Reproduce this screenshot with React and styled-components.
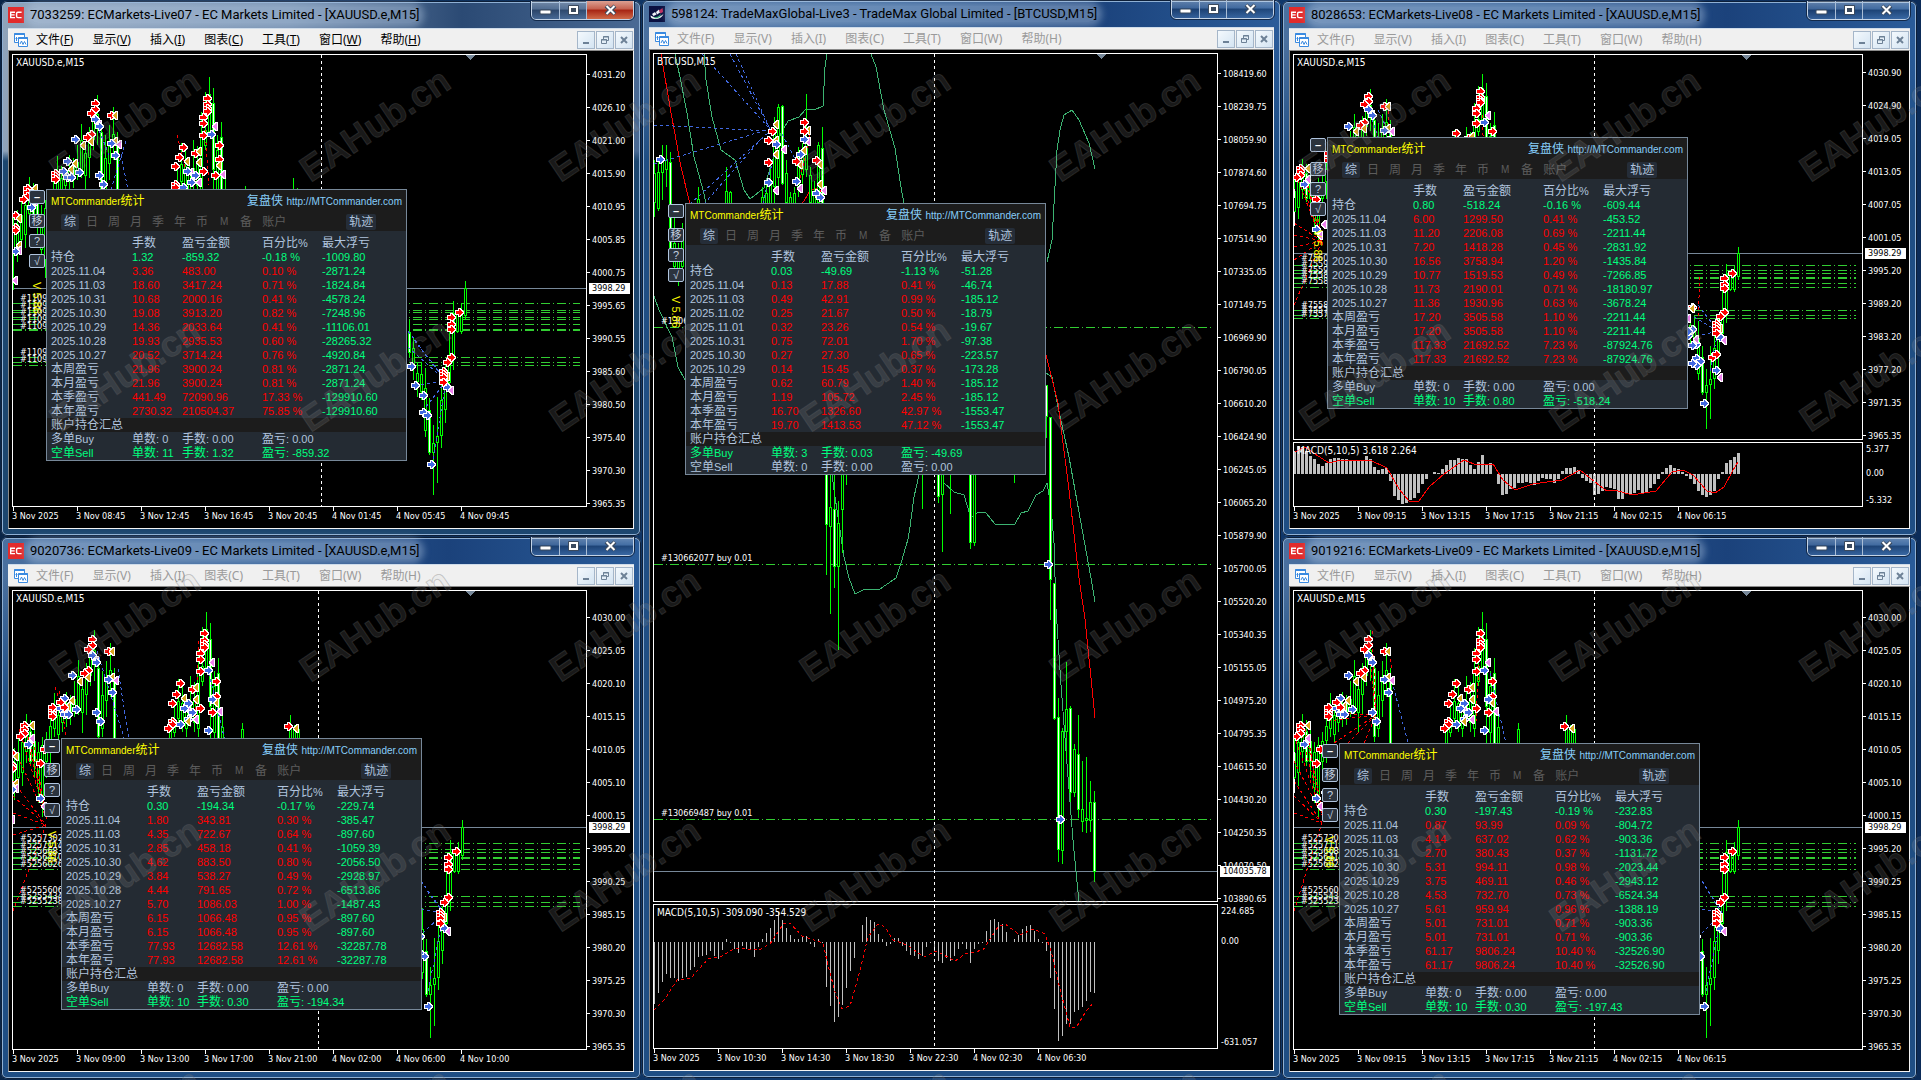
import React from "react";
import styled, { createGlobalStyle, css } from "styled-components";

const GlobalStyle = createGlobalStyle`
  * {
    box-sizing: border-box;
  }

  body {
    margin: 0;
    background: #0c2c56;
    overflow: hidden;
    font-family: "Noto Sans", "Noto Sans CJK SC", sans-serif;
  }

  button {
    padding: 0;
    border: none;
    background: none;
    font: inherit;
    color: inherit;
  }
`;

const Desktop = styled.div`
  position: relative;
  display: grid;
  grid-template-columns: 640fr 639fr 635fr;
  gap: 1px;
  height: 100vh;
  padding: 0 4px 1px 1px;
  overflow: hidden;
  background: linear-gradient(90deg, #0a2547, #123d73 50%, #0b2b58);
`;

const Column = styled.div`
  display: grid;
  grid-template-rows: ${(props) => (props.$single ? "1fr" : "535fr 542fr")};
  gap: 1px;
  min-width: 0;
  min-height: 0;
  padding: ${(props) => (props.$single ? "0 0 1px" : "1px 0 0")};
`;

/* ---------- window frame ---------- */

const Frame = styled.section`
  display: flex;
  flex-direction: column;
  min-width: 0;
  min-height: 0;
  padding: 0 7px 7px;
  border-radius: 6px;
  box-shadow: inset 0 0 0 1px #0d1f38, inset 0 0 0 2px #8fb0d4;
  background: ${(props) =>
    props.$active
      ? "linear-gradient(180deg, transparent 150px, #1c466f 160px), linear-gradient(90deg, #8fa3ba, #6f8aaa 45%, #2b4a74 72%, #4a6a94)"
      : "linear-gradient(180deg, transparent 40px, #1f4e84 160px), linear-gradient(90deg, #4a709f, #2c5a92 40%, #1b427b 70%, #2a5c9a)"};
`;

const TitleBar = styled.header`
  display: flex;
  align-items: flex-start;
  height: 28px;
  flex: none;
`;

const AppIcon = styled.svg`
  width: 16px;
  height: 16px;
  margin: 6px 6px 0 0;
  flex: none;
`;

const Title = styled.h1`
  margin: 6px 0 0;
  border-radius: 8px;
  background: rgba(190, 210, 235, 0.4);
  box-shadow: 0 0 7px 5px rgba(190, 210, 235, 0.4);
  font-family: Roboto, "Noto Sans", sans-serif;
  font-size: 13px;
  font-weight: 400;
  line-height: 16px;
  white-space: nowrap;
  color: #000;
`;

const Caption = styled.div`
  display: flex;
  height: 19px;
  margin-left: auto;
  border: 1px solid #c3d3e6;
  border-top: none;
  border-radius: 0 0 5px 5px;
  overflow: hidden;
  outline: 1px solid #12294a;
`;

const CaptionButton = styled.button`
  display: flex;
  align-items: center;
  justify-content: center;
  width: ${(props) => (props.$wide ? 47 : 27)}px;
  background: linear-gradient(
    180deg,
    rgba(255, 255, 255, 0.3),
    rgba(255, 255, 255, 0.12) 45%,
    rgba(0, 10, 30, 0.25) 50%,
    rgba(120, 160, 210, 0.2)
  );

  & + & {
    border-left: 1px solid #a9bdd6;
  }

  ${(props) =>
    props.$danger &&
    css`
      background: linear-gradient(180deg, #dca092, #c4604e 45%, #a62312 50%, #cf6a48);
    `}
`;

const MenuBar = styled.nav`
  display: flex;
  align-items: center;
  height: 21px;
  flex: none;
  padding: 0 1px 0 5px;
  background: #f0f0f0;
  box-shadow: 0 -1px 0 #cfdcea;
`;

const MenuIcon = styled.svg`
  width: 16px;
  height: 16px;
  margin-right: 7px;
`;

const MenuItems = styled.div`
  display: flex;
  gap: 19px;
  color: ${(props) => (props.$active ? "#000" : "#9a9a9a")};
`;

const MenuButton = styled.button`
  font-family: "Noto Sans", "Noto Sans CJK SC", sans-serif;
  font-size: 12px;
  line-height: 20px;
  white-space: nowrap;

  u {
    text-decoration: ${(props) => (props.$active ? "underline" : "none")};
  }
`;

const MdiButtons = styled.div`
  display: flex;
  gap: 1px;
  margin-left: auto;
`;

const MdiButton = styled.button`
  display: flex;
  align-items: center;
  justify-content: center;
  width: 18px;
  height: 18px;
  border: 1px solid #a5b6c9;
  background: linear-gradient(135deg, #f4f9fd, #d4e4f2);
`;

/* ---------- chart area ---------- */

const Client = styled.div`
  position: relative;
  display: flex;
  flex-direction: column;
  flex: 1;
  min-height: 0;
  padding: 3px 0 0 3px;
  border: 1px solid #f4f4f4;
  border-top-color: #8a8a8a;
  border-left-color: #8a8a8a;
  background: #000;
  color: #fff;
  font-family: "DejaVu Sans Condensed", "Noto Sans", sans-serif;
  font-size: 9px;
`;

const Pane = styled.div`
  display: flex;
  min-height: 0;
  flex: ${(props) => (props.$height ? `none` : "1")};
  height: ${(props) => (props.$height ? `${props.$height}px` : "auto")};
  margin-top: ${(props) => (props.$height ? 2 : 0)}px;
`;

const Plot = styled.div`
  position: relative;
  flex: 1;
  min-width: 0;
  border: 1px solid #fff;
  overflow: hidden;

  > svg {
    display: block;
    width: 100%;
    height: 100%;
  }
`;

const PlotLabel = styled.span`
  position: absolute;
  left: 3px;
  top: 2px;
  font-size: 10px;
  line-height: 12px;
`;

const PriceAxis = styled.div`
  position: relative;
  flex: none;
  width: ${(props) => props.$width}px;
  padding-top: ${(props) => props.$offset}px;
  overflow: hidden;
`;

const PriceLabel = styled.div`
  display: flex;
  align-items: center;
  gap: 2px;
  height: 33px;

  &::before {
    content: "";
    width: 3px;
    height: 1px;
    background: #fff;
  }
`;

const PriceTag = styled.div`
  position: absolute;
  left: 2px;
  right: 3px;
  top: ${(props) => props.$top}px;
  padding-left: 3px;
  background: #fff;
  color: #000;
  line-height: 11px;
`;

const ScaleAxis = styled.div`
  display: grid;
  grid-template-rows: ${(props) => props.$zero - 7}px 1fr 11px;
  flex: none;
  width: ${(props) => props.$width}px;
  padding: 2px 0 1px 3px;
  line-height: 11px;
`;

const TimeAxis = styled.div`
  display: flex;
  flex: none;
  height: 21px;
  overflow: hidden;
`;

const TimeLabel = styled.span`
  position: relative;
  flex: none;
  width: 64px;
  line-height: 19px;
  white-space: nowrap;

  &::before {
    content: "";
    position: absolute;
    left: 1px;
    top: 0;
    width: 1px;
    height: 4px;
    background: #fff;
  }
`;

/* ---------- MTCommander panel ---------- */

const Floating = styled.div`
  position: absolute;
  left: ${(props) => props.$x}px;
  top: ${(props) => props.$y}px;
  display: flex;
  align-items: flex-start;
  gap: 1px;
`;

const Rail = styled.div`
  display: flex;
  flex-direction: column;
  align-items: center;
  gap: 6px;
  padding-top: 1px;
`;

const RailButton = styled.button`
  width: 16px;
  height: 14px;
  border: 1px solid #b0c4de;
  border-radius: 2px;
  background: #2b333e;
  color: #c3d0e0;
  font-family: "Liberation Sans", "Noto Sans CJK SC", sans-serif;
  font-size: 11px;
  line-height: 12px;

  &:first-child {
    margin-bottom: 4px;
    font-weight: 700;
    color: #fff;
  }
`;

const Version = styled.span`
  margin-top: 8px;
  color: #ff0;
  font-family: "Liberation Sans", sans-serif;
  font-size: 11px;
  line-height: 12px;
  writing-mode: vertical-rl;
`;

const PanelBox = styled.div`
  width: 361px;
  border: 1px solid #778899;
  background: #242b33;
  color: #b0c4de;
  font-family: "Liberation Sans", "Noto Sans CJK SC", sans-serif;
  font-size: 11px;
`;

const PanelHead = styled.div`
  height: 41px;
  background: #1c1c1c;
`;

const PanelTitle = styled.div`
  display: flex;
  justify-content: space-between;
  height: 24px;
  padding: 0 4px;
  font-size: 10px;
  line-height: 22px;
  color: #ff0;

  a {
    color: #87cefa;
    text-decoration: none;
  }
`;

const Cn = styled.span`
  font-size: 12px;
`;

const Tabs = styled.div`
  display: flex;
  gap: 4px;
  padding-left: 14px;
`;

const Tab = styled.button`
  min-width: 18px;
  height: 16px;
  padding: 0 3px;
  border-radius: 2px;
  font-size: ${(props) => (props.$small ? 10 : 12)}px;
  line-height: 16px;
  color: #5c5c5c;

  ${(props) =>
    props.$on &&
    css`
      background: #252d38;
      color: #b0c4de;
    `}

  &:last-child {
    margin-left: 53px;
  }
`;

const Stats = styled.table`
  width: 100%;
  table-layout: fixed;
  border-collapse: collapse;

  th,
  td {
    height: 14px;
    padding: 0;
    font-weight: 400;
    line-height: 14px;
    text-align: left;
    white-space: nowrap;
  }

  thead th {
    height: 19px;
    padding-top: 5px;
  }

  th:first-child,
  td:first-child {
    padding-left: 4px;
  }
`;

const Value = styled.td`
  color: ${(props) => (props.$down ? "#00ff7f" : "#ff0000")};
`;

const SectionRow = styled.tr`
  background: #1c1c1c;
`;

const SumRow = styled.tr`
  color: ${(props) => (props.$open ? "#00ff7f" : "#b0c4de")};
`;

/* ---------- watermark ---------- */

const Watermarks = styled.div`
  position: absolute;
  inset: 0;
  display: grid;
  grid-template-columns: repeat(8, 250px);
  grid-auto-rows: 250px;
  overflow: hidden;
  pointer-events: none;
`;

const Watermark = styled.span`
  display: flex;
  align-items: center;
  justify-content: center;
  font-family: "Liberation Sans", Arial, sans-serif;
  font-size: 36px;
  font-weight: 700;
  color: rgba(200, 200, 200, 0.14);
  -webkit-text-stroke: 1px rgba(100, 100, 100, 0.3);
  transform: rotate(-34deg);
`;

const BAR = 4;
const LIME = "#00ff00";
const BLUE = "#4169e1";
const RED = "#ff0000";
const BAND = "#3cb371";

// Gold bars: [bars back, high, low, body top, body bottom, filled],
// levels are ticks below 4031.20
const goldBars = [
  [113, 141, 216, 150, 180, 0], [112, 136, 188, 150, 170, 0], [111, 124, 178, 141, 166, 0],
  [110, 114, 174, 131, 161, 0], [109, 103, 151, 112, 140, 0], [108, 109, 154, 120, 150, 1],
  [107, 116, 166, 130, 150, 1], [106, 131, 190, 140, 176, 0], [105, 126, 204, 134, 186, 0],
  [104, 121, 166, 130, 150, 0], [103, 98, 151, 115, 130, 0], [102, 82, 126, 100, 118, 0],
  [101, 92, 131, 104, 124, 0], [100, 98, 121, 104, 112, 0], [99, 81, 116, 96, 106, 0],
  [98, 84, 114, 90, 106, 0], [97, 71, 106, 88, 100, 0], [96, 50, 104, 66, 96, 0],
  [95, 71, 122, 79, 102, 0], [94, 53, 104, 60, 84, 0], [93, 36, 76, 44, 66, 0],
  [92, 21, 71, 40, 52, 0], [91, 46, 131, 58, 126, 1], [90, 61, 126, 84, 118, 0],
  [89, 51, 106, 72, 90, 0], [88, 33, 86, 60, 68, 0], [87, 58, 141, 70, 136, 1],
  [73, 111, 150, 118, 146, 0], [72, 91, 126, 112, 122, 0], [71, 69, 116, 90, 108, 0],
  [70, 76, 121, 92, 114, 0], [69, 91, 126, 98, 118, 0], [68, 66, 116, 94, 110, 1],
  [67, 72, 121, 90, 112, 0], [66, 38, 126, 62, 118, 0], [65, 18, 76, 56, 72, 0],
  [64, 3, 61, 20, 58, 0], [63, 14, 136, 29, 96, 1], [62, 61, 146, 76, 122, 0],
  [61, 48, 141, 63, 134, 1], [60, 98, 150, 116, 146, 0], [55, 112, 150, 118, 146, 0],
  [43, 104, 140, 116, 136, 0], [42, 114, 150, 118, 146, 0], [41, 115, 150, 118, 146, 0],
  [15, 240, 290, 256, 284, 0], [14, 246, 283, 258, 279, 1], [13, 263, 306, 274, 292, 0],
  [12, 288, 323, 299, 308, 0], [11, 288, 326, 300, 318, 0], [10, 294, 363, 314, 357, 0],
  [9, 324, 381, 336, 379, 1], [8, 351, 421, 369, 379, 0], [7, 323, 409, 362, 369, 0],
  [6, 299, 374, 326, 362, 0], [5, 292, 349, 306, 336, 0], [4, 256, 319, 286, 309, 0],
  [3, 227, 296, 239, 283, 0], [2, 237, 259, 240, 258, 0], [1, 229, 260, 239, 258, 0],
  [0, 207, 246, 214, 242, 0],
];

// s = sell arrow, b = buy arrow, y / v = close marks
const goldMarks = [
  ["s", 92, 29], ["s", 92, 35], ["s", 93, 39], ["s", 88, 41], ["s", 93, 60], ["s", 94, 63],
  ["s", 102, 99], ["s", 102, 102], ["s", 102, 105], ["s", 109, 114], ["s", 109, 118],
  ["s", 109, 122], ["s", 110, 125], ["s", 112, 141], ["s", 112, 153], ["s", 112, 156],
  ["y", 96, 71], ["y", 94, 67], ["y", 88, 41], ["y", 98, 89], ["y", 99, 95], ["y", 88, 67],
  ["y", 108, 114], ["y", 112, 144], ["y", 112, 171],
  ["v", 92, 50], ["v", 87, 70], ["v", 108, 127], ["v", 112, 176], ["v", 113, 206],
  ["b", 97, 65], ["b", 92, 45], ["b", 91, 52], ["b", 88, 69], ["b", 87, 81], ["b", 99, 87],
  ["b", 100, 97], ["b", 99, 103], ["b", 98, 103], ["b", 96, 98], ["b", 91, 101],
  ["b", 90, 110], ["b", 108, 133], ["b", 112, 177],
  ["s", 64, 24], ["s", 64, 30], ["s", 64, 34], ["s", 64, 37], ["s", 65, 43], ["s", 65, 49],
  ["s", 65, 61], ["s", 70, 73], ["s", 71, 83], ["s", 72, 92], ["s", 67, 79], ["s", 65, 97],
  ["s", 61, 71], ["s", 61, 85], ["s", 62, 101], ["s", 72, 110], ["s", 72, 113],
  ["y", 67, 77], ["y", 67, 88], ["y", 62, 91], ["y", 70, 87],
  ["v", 63, 52], ["v", 61, 100], ["v", 67, 108], ["v", 69, 98],
  ["b", 63, 60], ["b", 69, 97], ["b", 67, 101], ["b", 68, 108], ["b", 70, 113],
  ["b", 13, 292], ["b", 12, 311], ["b", 10, 321], ["b", 10, 338], ["b", 9, 341],
  ["b", 8, 390], ["b", 4, 313], ["y", 5, 302], ["v", 4, 316],
  ["s", 1, 238], ["s", 3, 243], ["s", 3, 250], ["s", 3, 255], ["s", 3, 283], ["s", 4, 288],
  ["s", 5, 297], ["s", 5, 300], ["s", 5, 303], ["s", 5, 308],
];

const extraMarks = [
  ["s", 73, 117], ["s", 43, 115], ["b", 68, 92], ["b", 62, 88], ["y", 69, 110],
  ["b", 63, 119], ["s", 100, 91], ["s", 102, 96], ["s", 104, 137], ["s", 105, 151],
  ["v", 104, 180], ["v", 105, 193], ["b", 105, 186], ["s", 99, 96], ["y", 42, 117],
];

const rightMarks = [
  ["s", 11, 278], ["y", 12, 279], ["v", 13, 290], ["b", 11, 303], ["b", 12, 306],
  ["v", 11, 315], ["b", 11, 322], ["b", 10, 346], ["b", 11, 344], ["s", 6, 337],
  ["s", 5, 333], ["b", 5, 352], ["v", 5, 360],
];

// BTC bars in plot pixels from the top of the pane
const btcBars = [
  [110, 107, 164, 120, 150, 0], [109, 107, 158, 119, 156, 0], [108, 92, 147, 108, 120, 0],
  [107, 92, 134, 107, 117, 0], [106, 99, 202, 109, 200, 1], [105, 157, 222, 190, 214, 0],
  [104, 190, 233, 196, 228, 0], [103, 170, 218, 184, 214, 0], [99, 134, 160, 146, 158, 0],
  [92, 114, 160, 138, 156, 0], [91, 138, 160, 139, 158, 0], [83, 134, 160, 144, 158, 0],
  [82, 127, 160, 140, 158, 0], [81, 107, 160, 128, 158, 0], [80, 64, 150, 78, 134, 0],
  [79, 51, 134, 54, 125, 0], [78, 52, 132, 53, 131, 1], [77, 107, 160, 120, 150, 0],
  [76, 139, 160, 144, 158, 0], [75, 134, 160, 140, 158, 0], [74, 94, 144, 112, 134, 0],
  [73, 90, 134, 104, 122, 0], [72, 41, 124, 90, 117, 0], [71, 114, 160, 122, 150, 0],
  [70, 128, 160, 140, 158, 0], [69, 89, 160, 92, 150, 0], [68, 74, 190, 95, 180, 1],
  [67, 380, 522, 400, 472, 1], [66, 400, 561, 454, 474, 0], [65, 400, 535, 456, 514, 1],
  [64, 448, 597, 470, 514, 0], [63, 400, 500, 410, 457, 0], [62, 400, 432, 405, 418, 0],
  [43, 400, 456, 410, 412, 0], [39, 400, 450, 410, 444, 1], [38, 400, 499, 410, 442, 0],
  [36, 400, 461, 402, 404, 0], [31, 400, 496, 410, 490, 1], [30, 400, 493, 410, 490, 0],
  [20, 400, 430, 402, 404, 0], [12, 332, 385, 332, 364, 1], [11, 364, 567, 364, 527, 1],
  [10, 530, 667, 530, 666, 1], [9, 645, 809, 664, 797, 1], [8, 675, 811, 678, 798, 0],
  [7, 609, 706, 656, 679, 0], [6, 653, 749, 655, 740, 1], [5, 691, 744, 696, 740, 0],
  [4, 662, 765, 701, 757, 1], [3, 708, 779, 756, 769, 0], [2, 704, 780, 765, 768, 0],
  [1, 728, 779, 749, 768, 0], [0, 738, 829, 749, 819, 1],
];

const btcMarks = [
  ["y", 80, 71], ["y", 80, 87], ["y", 80, 101], ["v", 78, 96], ["v", 80, 137],
  ["s", 80, 78], ["s", 81, 87], ["s", 81, 109], ["b", 79, 91], ["b", 81, 129],
  ["y", 72, 77], ["y", 73, 97], ["y", 74, 111], ["v", 72, 88], ["v", 74, 135],
  ["s", 72, 69], ["s", 72, 78], ["b", 72, 86], ["b", 73, 101], ["s", 74, 108],
  ["b", 74, 128], ["y", 69, 111], ["y", 69, 131], ["v", 68, 137], ["s", 69, 107],
  ["b", 69, 140], ["b", 68, 144], ["b", 108, 106], ["b", 11, 511], ["b", 8, 766],
];

const btcMacd = [
  62, 51, 40, 32, 36, 36, 39, 36, 35, 28, 25, 15, 14, 13, 9, 14, 17, 8, -3, 1, 7, 11, 4, 7, 7,
  15, 5, -3, -9, -14, -22, -30, -22, -14, -7, -3, -3, -6, -6, 2, 5, -3, 1, 45, 64, 80, 75, 63,
  46, 29, 16, 0, -17, -25, -22, -20, -8, -3, 4, 2, -4, -4, 4, 9, 13, 14, 17, 14, 5, 1, 9, 19,
  21, 16, 19, 14, 7, 2, 7, 21, 7, 2, 1, -11, -22, -23, -20, -18, -10, 0, -3, -7, -13, -16, -17,
  -11, -3, 1, 9, 36, 67, 99, 94, 82, 82, 70, 68, 65, 59, 50, 51,
];

const goldMacd = [
  -23, -28, -27, -23, -18, -15, -10, -8, -11, -15, -16, -16, -15, -15, -14, -13, -13, -14, -18,
  -15, -7, -4, -5, -6, 7, 22, 26, 30, 29, 26, 24, 19, 10, 5, 0, -2, -1, -5, -9, -14, -14, -16,
  -15, -15, -9, -5, -12, -19, -9, -11, 0, 10, 21, 20, 15, 14, 9, 9, 8, 9, 11, 7, 4, 5, 5, 9, 5,
  -3, -6, -6, -7, -4, 4, 7, 9, 21, 20, 17, 13, 14, 15, 25, 25, 19, 20, 19, 16, 20, 19, 14, 10,
  5, -2, -6, -9, -6, -5, -2, 2, 5, 10, 17, 21, 23, 21, 17, 5, -2, -11, -14, -17, -21,
];

const btcSignal =
  "0,105 11,94 23,75 37,73 54,54 66,52 81,43 105,45 116,39 130,18 136,18 148,31 169,38 173,56 181,87 188,104 196,101 206,66 214,32 224,19 231,22 239,35 253,40 270,52 282,46 301,56 311,49 329,45 344,22 351,19 366,30 379,24 391,29 397,46 406,84 416,122 422,123 432,106 440,97";

const goldSignal =
  "1,9 11,4 21,11 35,20 47,17 76,17 93,25 105,46 115,58 125,58 135,44 150,31 170,17 180,21 199,21 209,37 221,47 239,41 268,37 286,27 301,39 313,48 321,47 338,52 362,48 378,29 389,27 399,32 413,48 421,50 430,44 438,29 444,19";

const btcCurves = [
  [BAND, "21,0 26,23 33,59 40,103 49,136 52,149"],
  [BAND, "50,0 52,26 58,63 67,96 81,106 90,136 96,145 110,134 127,79 134,67 145,63 152,55 160,56 169,52 171,13 173,0"],
  [BAND, "217,0 222,13 230,56 241,94 247,133 250,150"],
  [BAND, "393,208 398,186 403,96 406,76 410,61 418,56 425,66 435,89 441,115"],
  [BAND, "0,242 5,256 18,283 24,313 31,326"],
  [BAND, "265,421 260,443 256,473 254,485 248,506 242,524 226,535 211,535 201,540 195,524 190,503 180,436 178,420"],
  [BAND, "289,428 300,438 310,441 317,464 324,458 332,459 341,470 361,470 367,459 374,457 382,441 389,437 393,429 397,453 400,489 402,555 407,631 413,710 419,786 425,848"],
  [BAND, "392,319 398,323 404,353 415,403 427,469 437,524 441,548"],
  [RED, "7,0 16,53 27,113 36,150"],
  [RED, "392,301 404,349 415,436 425,524 431,565 437,624 441,664"],
  [RED, "148,150 156,137 165,133 170,150"],
];

const btcLines = [
  [0, 71, 116, 77, BLUE], [0, 110, 116, 75, BLUE], [48, 0, 116, 75, BLUE], [76, 0, 116, 75, BLUE],
  [82, 0, 116, 75, BLUE], [36, 150, 116, 77, BLUE], [50, 150, 108, 84, BLUE],
  [109, 150, 120, 100, BLUE], [128, 80, 145, 112, BLUE], [145, 130, 156, 80, RED],
];

const fan = (x, y, from, color) => from.map(([fx, fy]) => [fx, fy, x, y, color]);

const live09Tickets = [
  ["#5257302", 250], ["#5257114", 257], ["#5256683", 263], ["#5256410", 269], ["#5256026", 276],
  ["#5255606", 302], ["#5255434", 308], ["#5255238", 313],
];

const windows = [
  {
    title: "7033259: ECMarkets-Live07 - EC Markets Limited - [XAUUSD.e,M15]",
    logo: "ec",
    active: true,
    symbol: "XAUUSD.e,M15",
    axis: 46,
    offset: 4,
    prices: "4031.20 4026.10 4021.00 4015.90 4010.95 4005.85 4000.75 3995.65 3990.55 3985.60 3980.50 3975.40 3970.30 3965.35",
    price: "3998.29",
    priceY: 233,
    times: ["3 Nov 2025", "3 Nov 08:45", "3 Nov 12:45", "3 Nov 16:45", "3 Nov 20:45", "4 Nov 01:45", "4 Nov 05:45", "4 Nov 09:45"],
    lastX: 452,
    dayX: 308,
    bars: goldBars,
    marks: goldMarks,
    map: (t) => 19 + t,
    orders: [248, 255, 257, 262, 264, 269, 274, 275, 302, 307, 310],
    tickets: [["#1109", 246], ["#1109", 253], ["#1109", 260], ["#1109", 267], ["#1109", 274], ["#1109", 300], ["#1109", 307]],
    lines: [
      ...fan(433, 326, [[395, 276], [401, 285], [395, 292], [408, 330], [413, 352], [419, 410]], BLUE),
      [113, 86, 90, 160, BLUE], [84, 70, 96, 100, BLUE], [108, 100, 116, 140, BLUE],
      [190, 45, 196, 130, RED], [164, 80, 174, 120, RED],
    ],
    panel: [16, 134],
    hold: ["1.32", "-859.32", "-0.18 %", "-1009.80"],
    rows: [
      ["2025.11.04", "3.36", "483.00", "0.10 %", "-2871.24"],
      ["2025.11.03", "18.60", "3417.24", "0.71 %", "-1824.84"],
      ["2025.10.31", "10.68", "2000.16", "0.41 %", "-4578.24"],
      ["2025.10.30", "19.08", "3913.20", "0.82 %", "-7248.96"],
      ["2025.10.29", "14.36", "2033.64", "0.41 %", "-11106.01"],
      ["2025.10.28", "19.93", "2935.53", "0.60 %", "-28265.32"],
      ["2025.10.27", "20.52", "3714.24", "0.76 %", "-4920.84"],
      ["本周盈亏", "21.96", "3900.24", "0.81 %", "-2871.24"],
      ["本月盈亏", "21.96", "3900.24", "0.81 %", "-2871.24"],
      ["本季盈亏", "441.49", "72090.96", "17.33 %", "-129910.60"],
      ["本年盈亏", "2730.32", "210504.37", "75.85 %", "-129910.60"],
    ],
    buy: ["0", "0.00", "0.00"],
    sell: ["11", "1.32", "-859.32"],
  },
  {
    title: "9020736: ECMarkets-Live09 - EC Markets Limited - [XAUUSD.e,M15]",
    logo: "ec",
    symbol: "XAUUSD.e,M15",
    axis: 46,
    offset: 11,
    prices: "4030.00 4025.05 4020.10 4015.15 4010.05 4005.10 4000.15 3995.20 3990.25 3985.15 3980.20 3975.25 3970.30 3965.35",
    price: "3998.29",
    priceY: 236,
    times: ["3 Nov 2025", "3 Nov 09:00", "3 Nov 13:00", "3 Nov 17:00", "3 Nov 21:00", "4 Nov 02:00", "4 Nov 06:00", "4 Nov 10:00"],
    lastX: 449,
    dayX: 305,
    bars: goldBars,
    marks: [...goldMarks, ...extraMarks],
    map: (t) => 18 + t * 1.0186,
    orders: [252, 258, 261, 266, 267, 273, 278, 305, 311, 315],
    tickets: live09Tickets,
    lines: [
      ...fan(34, 228, [[2, 160], [6, 138], [10, 132], [14, 140], [20, 150]], RED),
      ...fan(33, 234, [[0, 190], [0, 205], [0, 222], [0, 244], [0, 320]], RED),
      [46, 100, 54, 150, RED], [42, 96, 50, 120, RED],
      [84, 60, 112, 150, BLUE], [105, 78, 116, 148, BLUE], [196, 82, 212, 150, BLUE],
      [186, 50, 182, 130, RED],
      ...fan(431, 322, [[408, 290], [414, 300], [408, 318], [410, 342], [415, 400]], BLUE),
    ],
    panel: [31, 147],
    hold: ["0.30", "-194.34", "-0.17 %", "-229.74"],
    rows: [
      ["2025.11.04", "1.80", "343.81", "0.30 %", "-385.47"],
      ["2025.11.03", "4.35", "722.67", "0.64 %", "-897.60"],
      ["2025.10.31", "2.85", "458.18", "0.41 %", "-1059.39"],
      ["2025.10.30", "4.62", "883.50", "0.80 %", "-2056.50"],
      ["2025.10.29", "3.84", "538.27", "0.49 %", "-2928.97"],
      ["2025.10.28", "4.44", "791.65", "0.72 %", "-6513.86"],
      ["2025.10.27", "5.70", "1086.03", "1.00 %", "-1487.43"],
      ["本周盈亏", "6.15", "1066.48", "0.95 %", "-897.60"],
      ["本月盈亏", "6.15", "1066.48", "0.95 %", "-897.60"],
      ["本季盈亏", "77.93", "12682.58", "12.61 %", "-32287.78"],
      ["本年盈亏", "77.93", "12682.58", "12.61 %", "-32287.78"],
    ],
    buy: ["0", "0.00", "0.00"],
    sell: ["10", "0.30", "-194.34"],
  },
  {
    title: "598124: TradeMaxGlobal-Live3 - TradeMax Global Limited - [BTCUSD,M15]",
    logo: "tm",
    symbol: "BTCUSD,M15",
    axis: 55,
    offset: 4,
    prices:
      "108419.60 108239.75 108059.90 107874.60 107694.75 107514.90 107335.05 107149.75 106969.90 106790.05 106610.20 106424.90 106245.05 106065.20 105879.90 105700.05 105520.20 105340.35 105155.05 104975.20 104795.35 104615.50 104430.20 104250.35 104070.50 103890.65",
    price: "104035.78",
    priceY: 817,
    times: ["3 Nov 2025", "3 Nov 10:30", "3 Nov 14:30", "3 Nov 18:30", "3 Nov 22:30", "4 Nov 02:30", "4 Nov 06:30"],
    lastX: 440,
    dayX: 280,
    bars: btcBars,
    marks: btcMarks,
    map: (t) => t - 1,
    orders: [273, 510, 765],
    tickets: [["#130651208 buy 0.01", 270], ["#130662077 buy 0.01", 507], ["#130669487 buy 0.01", 762]],
    curves: btcCurves,
    lines: btcLines,
    sub: { label: "MACD(5,10,5) -309.090 -354.529", height: 145, zero: 37, width: 1, data: btcMacd, signal: btcSignal, dashed: true, scale: ["224.685", "0.00", "-631.057"] },
    panel: [14, 149],
    hold: ["0.03", "-49.69", "-1.13 %", "-51.28"],
    rows: [
      ["2025.11.04", "0.13", "17.88", "0.41 %", "-46.74"],
      ["2025.11.03", "0.49", "42.91", "0.99 %", "-185.12"],
      ["2025.11.02", "0.25", "21.67", "0.50 %", "-18.79"],
      ["2025.11.01", "0.32", "23.26", "0.54 %", "-19.67"],
      ["2025.10.31", "0.75", "72.01", "1.70 %", "-97.38"],
      ["2025.10.30", "0.27", "27.30", "0.65 %", "-223.57"],
      ["2025.10.29", "0.14", "15.45", "0.37 %", "-173.28"],
      ["本周盈亏", "0.62", "60.79", "1.40 %", "-185.12"],
      ["本月盈亏", "1.19", "105.72", "2.45 %", "-185.12"],
      ["本季盈亏", "16.70", "1326.60", "42.97 %", "-1553.47"],
      ["本年盈亏", "19.70", "1413.53", "47.12 %", "-1553.47"],
    ],
    buy: ["3", "0.03", "-49.69"],
    sell: ["0", "0.00", "0.00"],
  },
  {
    title: "8028653: ECMarkets-Live08 - EC Markets Limited - [XAUUSD.e,M15]",
    logo: "ec",
    symbol: "XAUUSD.e,M15",
    axis: 46,
    offset: 2,
    prices: "4030.90 4024.90 4019.05 4013.05 4007.05 4001.05 3995.20 3989.20 3983.20 3977.20 3971.35 3965.35",
    price: "3998.29",
    priceY: 198,
    times: ["3 Nov 2025", "3 Nov 09:15", "3 Nov 13:15", "3 Nov 17:15", "3 Nov 21:15", "4 Nov 02:15", "4 Nov 06:15"],
    lastX: 444,
    dayX: 300,
    bars: goldBars,
    marks: [...goldMarks, ...extraMarks, ...rightMarks],
    map: (t) => 16 + t * 0.85,
    orders: [210, 215, 218, 222, 223, 228, 232, 255, 260, 263],
    tickets: [
      ["#7560", 206], ["#7559", 212], ["#7559", 218], ["#7558", 223], ["#7558", 229],
      ["#7558", 253], ["#7557", 258], ["#7557", 262],
    ],
    lines: [
      ...fan(29, 190, [[2, 120], [6, 122], [10, 118], [14, 130], [20, 140]], RED),
      ...fan(28, 186, [[0, 168], [0, 180], [0, 192], [0, 205], [0, 250]], RED),
      [78, 64, 90, 100, BLUE], [84, 55, 96, 80, BLUE], [94, 50, 94, 80, RED],
      [188, 60, 190, 100, RED],
      ...fan(424, 276, [[404, 250], [400, 262], [408, 280], [416, 316]], BLUE),
      [406, 222, 404, 262, RED],
    ],
    sub: { label: "MACD(5,10,5) 3.618 2.264", height: 65, zero: 31, width: 3, data: goldMacd, signal: goldSignal, scale: ["5.377", "0.00", "-5.332"] },
    panel: [16, 82],
    hold: ["0.80", "-518.24", "-0.16 %", "-609.44"],
    rows: [
      ["2025.11.04", "6.00", "1299.50", "0.41 %", "-453.52"],
      ["2025.11.03", "11.20", "2206.08", "0.69 %", "-2211.44"],
      ["2025.10.31", "7.20", "1418.28", "0.45 %", "-2831.92"],
      ["2025.10.30", "16.56", "3758.94", "1.20 %", "-1435.84"],
      ["2025.10.29", "10.77", "1519.53", "0.49 %", "-7266.85"],
      ["2025.10.28", "11.73", "2190.01", "0.71 %", "-18180.97"],
      ["2025.10.27", "11.36", "1930.96", "0.63 %", "-3678.24"],
      ["本周盈亏", "17.20", "3505.58", "1.10 %", "-2211.44"],
      ["本月盈亏", "17.20", "3505.58", "1.10 %", "-2211.44"],
      ["本季盈亏", "117.33", "21692.52", "7.23 %", "-87924.76"],
      ["本年盈亏", "117.33", "21692.52", "7.23 %", "-87924.76"],
    ],
    buy: ["0", "0.00", "0.00"],
    sell: ["10", "0.80", "-518.24"],
  },
  {
    title: "9019216: ECMarkets-Live09 - EC Markets Limited - [XAUUSD.e,M15]",
    logo: "ec",
    symbol: "XAUUSD.e,M15",
    axis: 46,
    offset: 11,
    prices: "4030.00 4025.05 4020.10 4015.15 4010.05 4005.10 4000.15 3995.20 3990.25 3985.15 3980.20 3975.25 3970.30 3965.35",
    price: "3998.29",
    priceY: 236,
    times: ["3 Nov 2025", "3 Nov 09:15", "3 Nov 13:15", "3 Nov 17:15", "3 Nov 21:15", "4 Nov 02:15", "4 Nov 06:15"],
    lastX: 444,
    dayX: 300,
    bars: goldBars,
    marks: [...goldMarks, ...extraMarks],
    map: (t) => 18 + t * 1.0186,
    orders: [252, 258, 261, 266, 267, 273, 278, 305, 311, 315],
    tickets: live09Tickets,
    lines: [
      ...fan(29, 226, [[2, 150], [6, 138], [10, 132], [14, 145], [0, 170]], RED),
      ...fan(28, 232, [[0, 190], [0, 205], [0, 222], [0, 320]], RED),
      ...fan(82, 124, [[36, 122], [34, 130], [40, 152], [54, 152], [70, 152], [75, 60], [78, 40]], RED),
      [94, 56, 98, 80, RED], [98, 90, 114, 152, BLUE], [196, 82, 212, 152, BLUE],
      [186, 50, 182, 130, RED],
      ...fan(428, 322, [[408, 290], [414, 300], [408, 318], [408, 342], [412, 400]], BLUE),
    ],
    panel: [28, 152],
    hold: ["0.30", "-197.43", "-0.19 %", "-232.83"],
    rows: [
      ["2025.11.04", "0.87", "93.99", "0.09 %", "-804.72"],
      ["2025.11.03", "4.14", "637.02", "0.62 %", "-903.36"],
      ["2025.10.31", "2.70", "380.43", "0.37 %", "-1131.72"],
      ["2025.10.30", "5.31", "994.11", "0.98 %", "-2023.44"],
      ["2025.10.29", "3.75", "469.11", "0.46 %", "-2943.12"],
      ["2025.10.28", "4.53", "732.70", "0.73 %", "-6524.34"],
      ["2025.10.27", "5.61", "959.94", "0.96 %", "-1388.19"],
      ["本周盈亏", "5.01", "731.01", "0.71 %", "-903.36"],
      ["本月盈亏", "5.01", "731.01", "0.71 %", "-903.36"],
      ["本季盈亏", "61.17", "9806.24", "10.40 %", "-32526.90"],
      ["本年盈亏", "61.17", "9806.24", "10.40 %", "-32526.90"],
    ],
    buy: ["0", "0.00", "0.00"],
    sell: ["10", "0.30", "-197.43"],
  },
];

const menus = [
  ["文件", "F"],
  ["显示", "V"],
  ["插入", "I"],
  ["图表", "C"],
  ["工具", "T"],
  ["窗口", "W"],
  ["帮助", "H"],
];

const tabs = ["综", "日", "周", "月", "季", "年", "币", "M", "备", "账户", "轨迹"];

const Logo = ({ kind }) =>
  kind === "ec" ? (
    <AppIcon viewBox="0 0 16 16">
      <rect width="16" height="16" fill="#e22b2b" />
      <g fill="none" stroke="#fff" strokeWidth="1.4">
        <path d="M7 5.2H2.7v5.4H7M2.700 7.9H6.6" />
        <path d="M13.6 5.2H10q-1.4 0-1.4 1.4v2.6q0 1.4 1.4 1.4h3.6" />
      </g>
    </AppIcon>
  ) : (
    <AppIcon viewBox="0 0 16 16">
      <rect width="16" height="16" fill="#0a1040" />
      <path d="M1.500 9.500q0 4 6 3.500 5-.5 7-5-3 3-6.500 3.200Q4 11.500 1.500 9.500z" fill="#fff" />
      <path d="M3 8l3-2 1.500 2.500-3 1.500zM7 6l3-2.500 1 3-3 2z" fill="#f0f2f8" />
      <path d="M10 4.500L13.500 2l.5 4-2.500 1.500z" fill="#c03060" />
      <path d="M4 11.500l5-1 3-2.500-1 3-4 1.500z" fill="#3aa57a" />
    </AppIcon>
  );

const Mark = ({ kind, x, y }) => {
  if (kind === "s" || kind === "b") {
    return (
      <path
        d="M-3-1H0V-3H1V-2H2V-1H3V0H4V1H3V2H2V3H1V4H0V2H-3z"
        transform={`translate(${x - 2} ${y})`}
        fill={kind === "s" ? RED : BLUE}
        stroke="#fff"
        strokeWidth="2"
        paintOrder="stroke"
      />
    );
  }
  return (
    <path
      d="M-1 0H0V-1H1V-2H2V-3H3V4H2V3H1V2H0V1H-1z"
      transform={`translate(${x + 1} ${y})`}
      fill={kind === "y" ? "#daa520" : "#ee82ee"}
      stroke="#fff"
      strokeWidth="2"
      paintOrder="stroke"
    />
  );
};

const Chart = ({ win }) => {
  const barX = (b) => win.lastX - b * BAR;
  return (
    <svg shapeRendering="crispEdges">
      <line x1="0" x2="100%" y1={win.priceY + 0.5} y2={win.priceY + 0.5} stroke="#778899" />
      {win.orders.map((y) => (
        <line key={y} x1="0" x2="99%" y1={y + 0.5} y2={y + 0.5} stroke="#32cd32" strokeDasharray="9 3 1 3" />
      ))}
      {win.curves?.map(([color, points]) => (
        <polyline key={points} points={points} fill="none" stroke={color} />
      ))}
      {win.bars.map(([b, high, low, top, bottom, filled]) => {
        const x = barX(b);
        const [h, l, t, d] = [high, low, top, bottom].map((v) => Math.round(win.map(v)));
        return (
          <g key={b}>
            <rect x={x} y={h} width="1" height={l - h} fill={LIME} />
            <rect x={x - 1} y={t} width="3" height={Math.max(1, d - t)} fill={LIME} />
            <rect x={x} y={t + 1} width="1" height={Math.max(0, d - t - 2)} fill={filled ? "#fff" : "#000"} />
          </g>
        );
      })}
      {win.lines.map(([x1, y1, x2, y2, color], i) => (
        <line key={i} x1={x1} y1={y1} x2={x2} y2={y2} stroke={color} strokeDasharray="3 3" />
      ))}
      <line x1={win.dayX + 0.5} x2={win.dayX + 0.5} y1="0" y2="100%" stroke="#fff" strokeDasharray="3 3" />
      {win.marks.map(([kind, b, t], i) => (
        <Mark key={i} kind={kind} x={barX(b)} y={Math.round(win.map(t))} />
      ))}
      {win.tickets.map(([ticket, y]) => (
        <text key={y} x="7" y={y} fill="#fff" fontSize="9">
          {ticket}
        </text>
      ))}
      <svg x="100%" overflow="visible">
        <path d="M-121 0h10l-5 5z" fill="#778899" />
      </svg>
    </svg>
  );
};

const Indicator = ({ win }) => {
  const { data, zero, width, signal, dashed } = win.sub;
  const last = data.length - 1;
  return (
    <svg shapeRendering="crispEdges">
      {data.map((v, i) => (
        <rect
          key={i}
          x={win.lastX - (last - i) * BAR - (width > 1 ? 1 : 0)}
          y={Math.min(zero, zero + v)}
          width={width}
          height={Math.abs(v)}
          fill="#c0c0c0"
        />
      ))}
      <polyline points={signal} fill="none" stroke={RED} strokeDasharray={dashed ? "3 3" : undefined} />
      <line x1={win.dayX + 0.5} x2={win.dayX + 0.5} y1="0" y2="100%" stroke="#fff" strokeDasharray="3 3" />
    </svg>
  );
};

const Sum = ({ name, open, values }) => (
  <SumRow $open={open}>
    <td>
      <Cn>{name.slice(0, 2)}</Cn>
      {name.slice(2)}
    </td>
    <td>
      <Cn>单数</Cn>: {values[0]}
    </td>
    <td>
      <Cn>手数</Cn>: {values[1]}
    </td>
    <td colSpan={2}>
      <Cn>盈亏</Cn>: {values[2]}
    </td>
  </SumRow>
);

const Panel = ({ win }) => (
  <Floating $x={win.panel[0]} $y={win.panel[1]}>
    <Rail>
      <RailButton>–</RailButton>
      <RailButton>移</RailButton>
      <RailButton>?</RailButton>
      <RailButton>√</RailButton>
      <Version>V 5.86</Version>
    </Rail>
    <PanelBox>
      <PanelHead>
        <PanelTitle>
          <span>
            MTCommander<Cn>统计</Cn>
          </span>
          <a href="http://MTCommander.com">
            <Cn>复盘侠 </Cn>http://MTCommander.com
          </a>
        </PanelTitle>
        <Tabs>
          {tabs.map((tab) => (
            <Tab key={tab} $on={tab === "综" || tab === "轨迹"} $small={tab === "M"}>
              {tab}
            </Tab>
          ))}
        </Tabs>
      </PanelHead>
      <Stats>
        <colgroup>
          <col style={{ width: 85 }} />
          <col style={{ width: 50 }} />
          <col style={{ width: 80 }} />
          <col style={{ width: 60 }} />
          <col />
        </colgroup>
        <thead>
          <tr>
            <th></th>
            <th><Cn>手数</Cn></th>
            <th><Cn>盈亏金额</Cn></th>
            <th><Cn>百分比</Cn>%</th>
            <th><Cn>最大浮亏</Cn></th>
          </tr>
        </thead>
        <tbody>
          <tr>
            <th><Cn>持仓</Cn></th>
            {win.hold.map((v, i) => (
              <Value key={i} $down>{v}</Value>
            ))}
          </tr>
          {win.rows.map(([name, ...values]) => (
            <tr key={name}>
              <th>{name.startsWith("本") ? <Cn>{name}</Cn> : name}</th>
              {values.map((v, i) => (
                <Value key={i} $down={i === 3}>{v}</Value>
              ))}
            </tr>
          ))}
          <SectionRow>
            <td colSpan={5}><Cn>账户持仓汇总</Cn></td>
          </SectionRow>
          <Sum name="多单Buy" open={win.buy[0] !== "0"} values={win.buy} />
          <Sum name="空单Sell" open={win.sell[0] !== "0"} values={win.sell} />
        </tbody>
      </Stats>
    </PanelBox>
  </Floating>
);

const Terminal = ({ win }) => (
  <Frame $active={win.active}>
    <TitleBar>
      <Logo kind={win.logo} />
      <Title>{win.title}</Title>
      <Caption>
        <CaptionButton aria-label="最小化">
          <svg width="13" height="12"><rect x="1" y="6" width="11" height="4" rx="1" fill="#fff" stroke="#3b4a5e" /></svg>
        </CaptionButton>
        <CaptionButton aria-label="最大化">
          <svg width="13" height="12">
            <rect x="1" y="1" width="11" height="10" rx="1" fill="#3b4a5e" />
            <rect x="3" y="3" width="7" height="6" fill="none" stroke="#fff" strokeWidth="2" />
          </svg>
        </CaptionButton>
        <CaptionButton aria-label="关闭" $wide $danger={win.active}>
          <svg width="13" height="12">
            <path d="M2 2l9 8M11 2l-9 8" stroke="#3b4a5e" strokeWidth="4" />
            <path d="M2.500 2l8 8M10.500 2l-8 8" stroke="#fff" strokeWidth="2" />
          </svg>
        </CaptionButton>
      </Caption>
    </TitleBar>
    <MenuBar>
      <MenuIcon viewBox="0 0 16 16" fill="#fff" stroke="#3a8ae0">
        <path d="M1.500 1.500h10v9h-10z" />
        <path d="M1.500 2h10" strokeWidth="2" />
        <path d="M3.500 5v4M2.500 6.500h2" />
        <path d="M5.500 5.500h9v9h-9z" />
        <path d="M5.500 6h9" strokeWidth="2" />
        <path d="M7 12l1.500-3 1.500 3.500 1.500-3 1.500 3" fill="none" />
      </MenuIcon>
      <MenuItems $active={win.active}>
        {menus.map(([label, key]) => (
          <MenuButton key={key} $active={win.active}>
            {label}(<u>{key}</u>)
          </MenuButton>
        ))}
      </MenuItems>
      <MdiButtons>
        <MdiButton aria-label="最小化图表">
          <svg width="10" height="10"><path d="M2 8h6" stroke="#6d8196" strokeWidth="2" /></svg>
        </MdiButton>
        <MdiButton aria-label="还原图表">
          <svg width="10" height="10" fill="none" stroke="#6d8196">
            <path d="M3.500 4V1.500h5v4H7M3 2h6M1.500 4.500h5v4h-5zM1 5h6" />
          </svg>
        </MdiButton>
        <MdiButton aria-label="关闭图表">
          <svg width="10" height="10"><path d="M2 2l6 6M8 2L2 8" stroke="#6d8196" strokeWidth="2" /></svg>
        </MdiButton>
      </MdiButtons>
    </MenuBar>
    <Client>
      <Pane>
        <Plot>
          <Chart win={win} />
          <PlotLabel>{win.symbol}</PlotLabel>
          <Panel win={win} />
        </Plot>
        <PriceAxis $width={win.axis} $offset={win.offset}>
          {win.prices.split(" ").map((p) => (
            <PriceLabel key={p}>{p}</PriceLabel>
          ))}
          <PriceTag $top={win.priceY - 4}>{win.price}</PriceTag>
        </PriceAxis>
      </Pane>
      {win.sub && (
        <Pane $height={win.sub.height}>
          <Plot>
            <Indicator win={win} />
            <PlotLabel>{win.sub.label}</PlotLabel>
          </Plot>
          <ScaleAxis $width={win.axis} $zero={win.sub.zero}>
            {win.sub.scale.map((v) => (
              <span key={v}>{v}</span>
            ))}
          </ScaleAxis>
        </Pane>
      )}
      <TimeAxis>
        {win.times.map((t) => (
          <TimeLabel key={t}>{t}</TimeLabel>
        ))}
      </TimeAxis>
    </Client>
  </Frame>
);

const App = () => (
  <>
    <GlobalStyle />
    <Desktop>
      <Column>
        <Terminal win={windows[0]} />
        <Terminal win={windows[1]} />
      </Column>
      <Column $single>
        <Terminal win={windows[2]} />
      </Column>
      <Column>
        <Terminal win={windows[3]} />
        <Terminal win={windows[4]} />
      </Column>
      <Watermarks aria-hidden="true">
        {Array.from({ length: 40 }, (_, i) => (
          <Watermark key={i}>EAHub.cn</Watermark>
        ))}
      </Watermarks>
    </Desktop>
  </>
);

export default App;
